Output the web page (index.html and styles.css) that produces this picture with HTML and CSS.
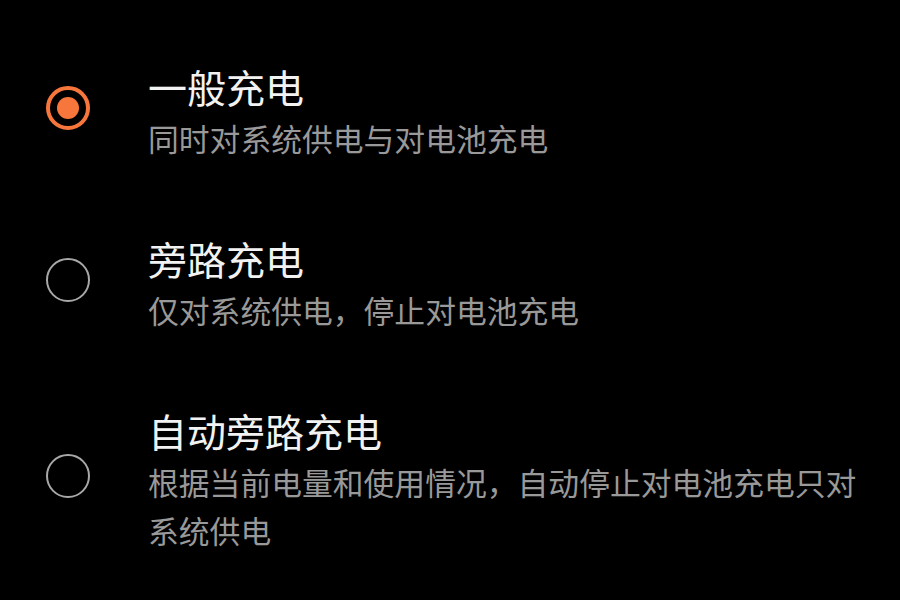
FILE: index.html
```html
<!DOCTYPE html>
<html lang="zh-CN">
<head>
<meta charset="utf-8">
<link rel="stylesheet" href="styles.css">
</head>
<body>
<div class="list">
  <div class="item">
    <div class="radio radio-on"><div class="dot"></div></div>
    <div class="text">
      <div class="title">一般充电</div>
      <div class="sub">同时对系统供电与对电池充电</div>
    </div>
  </div>
  <div class="item">
    <div class="radio"></div>
    <div class="text">
      <div class="title">旁路充电</div>
      <div class="sub">仅对系统供电，停止对电池充电</div>
    </div>
  </div>
  <div class="item">
    <div class="radio"></div>
    <div class="text">
      <div class="title">自动旁路充电</div>
      <div class="sub">根据当前电量和使用情况，自动停止对电池充电只对系统供电</div>
    </div>
  </div>
</div>
</body>
</html>
```
FILE: styles.css
```css
html, body {
  margin: 0;
  padding: 0;
  background: #000;
  width: 900px;
  height: 600px;
  overflow: hidden;
}
body {
  font-family: "Noto Sans CJK SC", "Noto Sans", sans-serif;
}
.list {
  display: flex;
  flex-direction: column;
  gap: 71px;
  padding: 61px 22px 0 46px;
}
.item {
  display: flex;
  align-items: center;
  gap: 58px;
}
.radio {
  flex: none;
  width: 40px;
  height: 40px;
  border: 2px solid #a8a8a8;
  border-radius: 50%;
  margin-bottom: 8px;
  display: flex;
  align-items: center;
  justify-content: center;
}
.radio-on {
  width: 36px;
  height: 36px;
  border: 4px solid #f7763b;
}
.dot {
  width: 22px;
  height: 22px;
  border-radius: 50%;
  background: #f7763b;
}
.text {
  flex: 1;
  min-width: 0;
}
.title {
  font-size: 39px;
  line-height: 50px;
  color: #f2f2f2;
}
.sub {
  margin-top: 3px;
  font-size: 30.8px;
  line-height: 48px;
  color: #999;
}
```
